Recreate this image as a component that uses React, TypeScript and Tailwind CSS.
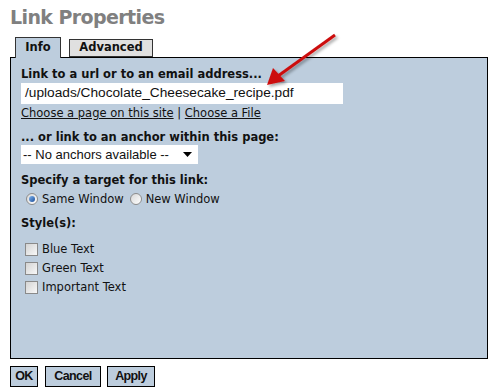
import React from 'react';

const Check = ({ label }: { label: string }) => (
  <label className="flex items-center gap-[4px] h-[19px]">
    <span className="w-[13px] h-[13px] border border-[#8a8a8a] bg-gradient-to-br from-[#d4d4d4] to-[#f8f8f8]" />
    <span>{label}</span>
  </label>
);

const Radio = ({ label, on }: { label: string; on?: boolean }) => (
  <label className="flex items-center gap-[4px]">
    <span className="w-[12px] h-[12px] rounded-full border border-[#8c8c8c] bg-gradient-to-br from-[#d8d8d8] to-white flex items-center justify-center">
      {on && <span className="w-[6px] h-[6px] rounded-full bg-gradient-to-br from-[#7fb4ee] to-[#1d4f9a]" />}
    </span>
    <span>{label}</span>
  </label>
);

export default function App() {
  return (
    <div className="relative w-[490px] h-[388px] bg-white font-['DejaVu_Sans',Verdana,sans-serif] text-[11.5px] text-[#111]">
      <h1 className="pl-[10px] pt-[5px] h-[36px] text-[19px] font-bold text-[#808080] leading-[24px] tracking-[-0.6px]">Link Properties</h1>

      <div className="flex items-end pl-[15px] gap-[8px] h-[21px]">
        <div className="w-[46px] h-[21px] border border-b-0 border-[#333] bg-[#bdcddd] font-bold flex items-center justify-center relative top-[1px]">Info</div>
        <div className="w-[84px] h-[18px] border border-[#333] bg-[#e0e0e0] font-bold flex items-center justify-center">Advanced</div>
      </div>

      <div className="ml-[10px] w-[478px] h-[302px] border border-black bg-[#bdcddd] px-[10px] pt-[9px]">
        <div className="font-bold leading-[14px]">Link to a url or to an email address...</div>
        <div className="mt-[2px] w-[322px] h-[21px] bg-white flex items-center px-[4px] font-['Liberation_Sans',Arial,sans-serif] text-[13.7px]">
          /uploads/Chocolate_Cheesecake_recipe.pdf
        </div>
        <div className="mt-[2px] leading-[14px]">
          <span className="underline">Choose a page on this site</span> | <span className="underline">Choose a File</span>
        </div>
        <div className="mt-[10px] font-bold leading-[14px]">... or link to an anchor within this page:</div>
        <div className="mt-[1px] w-[177px] h-[19px] bg-white flex items-center justify-between pl-[2px] pr-[3px] font-['Liberation_Sans',Arial,sans-serif] text-[13px]">
          <span>-- No anchors available --</span>
          <svg width="9" height="5" viewBox="0 0 9 5" className="mr-[3px]"><path d="M0 0h9L4.5 5z" fill="#000" /></svg>
        </div>
        <div className="mt-[9px] font-bold leading-[14px]">Specify a target for this link:</div>
        <div className="mt-[5px] flex gap-[6px] pl-[5px] leading-[14px]">
          <Radio label="Same Window" on />
          <Radio label="New Window" />
        </div>
        <div className="mt-[10px] font-bold leading-[14px]">Style(s):</div>
        <div className="mt-[10px] pl-[4px] flex flex-col">
          <Check label="Blue Text" />
          <Check label="Green Text" />
          <Check label="Important Text" />
        </div>
      </div>

      <div className="flex gap-[12px] pl-[10px] pt-[7px] font-['Liberation_Sans',Arial,sans-serif] font-bold text-[12.5px] tracking-[-0.6px]">
        <button className="w-[28px] h-[21px] border border-black bg-[#bdcddd]">OK</button>
        <button className="w-[56px] h-[21px] border border-black bg-[#bdcddd] -ml-[5px]">Cancel</button>
        <button className="w-[48px] h-[21px] border border-black bg-[#bdcddd] -ml-[6px]">Apply</button>
      </div>

      <svg className="absolute left-[260px] top-[28px]" width="90" height="66" viewBox="0 0 90 66">
        <defs>
          <filter id="sh" x="-20%" y="-20%" width="150%" height="150%">
            <feDropShadow dx="2" dy="2" stdDeviation="1.5" floodColor="#000" floodOpacity="0.35" />
          </filter>
        </defs>
        <g filter="url(#sh)">
          <line x1="75" y1="7" x2="18" y2="48" stroke="#cc1010" strokeWidth="3" />
          <path d="M7 57 L13 40 L25 53 Z" fill="#cc1010" />
        </g>
      </svg>
    </div>
  );
}
